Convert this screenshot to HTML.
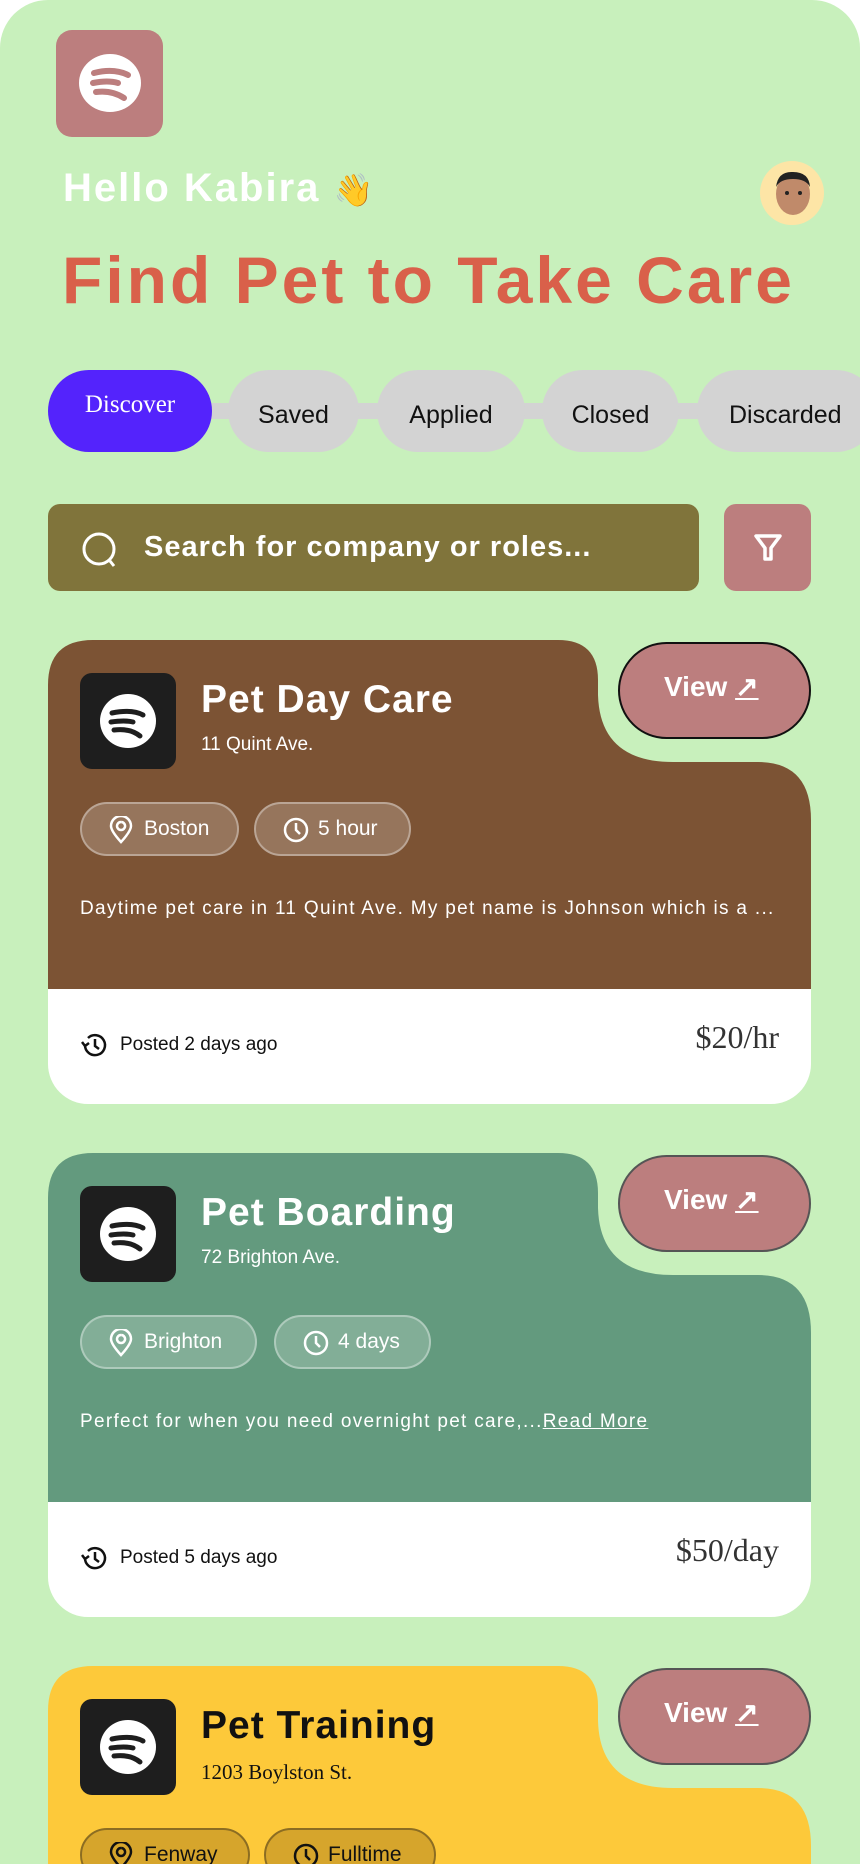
<!DOCTYPE html>
<html><head><meta charset="utf-8"><style>
*{margin:0;padding:0;box-sizing:border-box}
html,body{width:860px;height:1864px;overflow:hidden}
body{background:#fff;font-family:"Liberation Sans",sans-serif}
.page{position:absolute;left:0;top:0;width:860px;height:1864px;background:#c8f0bc;border-radius:48px 48px 0 0;overflow:hidden}
.abs{position:absolute}
.logo{left:56px;top:30px;width:107px;height:107px;background:#bc7e7e;border-radius:16px}
.hello{left:63px;top:166px;font-size:40px;font-weight:bold;color:#fff;letter-spacing:2px}
.avatar{left:760px;top:161px;width:64px;height:64px;border-radius:50%;background:#fde5a6}
.title{left:62px;top:242px;font-size:66px;font-weight:bold;color:#d9604a;white-space:nowrap;letter-spacing:3px}
.bar{left:200px;top:403px;width:660px;height:16px;background:#d3d3d3}
.tab{top:370px;height:82px;border-radius:41px;background:#d3d3d3;font-size:25px;color:#111;display:flex;align-items:center;justify-content:center;padding-top:8px}
.search{left:48px;top:504px;width:651px;height:87px;background:#80743b;border-radius:12px;color:#fff;font-size:29px;font-weight:bold;display:flex;align-items:center;padding-left:96px;letter-spacing:1px}
.filter{left:724px;top:504px;width:87px;height:87px;background:#bc7e7e;border-radius:12px}
.card{left:48px;width:763px}
.card svg.bg{position:absolute;left:0;top:0}
.foot{position:absolute;left:0;top:349px;width:763px;height:115px;background:#fff;border-radius:0 0 40px 40px}
.clogo{position:absolute;left:32px;top:33px;width:96px;height:96px;background:#1e1e1e;border-radius:12px}
.ctitle{position:absolute;left:153px;top:38px;font-size:39px;font-weight:bold;color:#fff;letter-spacing:1px}
.addr{position:absolute;left:153px;top:94px;font-size:19px;color:#fff}
.chip{position:absolute;top:162px;height:54px;border-radius:27px;background:rgba(255,255,255,.2);border:2px solid rgba(255,255,255,.35);color:#fff;font-size:21px;display:flex;align-items:center;padding-left:62px}
.chip svg{position:absolute;left:26px;top:12px}
.desc{position:absolute;left:32px;top:258px;font-size:19px;color:#fff;white-space:nowrap;letter-spacing:1.3px}
.view{position:absolute;left:570px;top:2px;width:193px;height:97px;border-radius:49px;background:#bc7e7e;border:2px solid #111;color:#fff;font-size:28px;font-weight:bold;padding:26px 0 0 44px}
.posted{position:absolute;left:32px;top:45px;font-size:19px;color:#111;padding-left:40px}
.posted svg{position:absolute;left:0;top:-3px}
.price{position:absolute;right:32px;top:30px;font-family:"Liberation Serif",serif;font-size:32px;color:#333}
</style></head><body><div class="page">
<div class="abs logo"><svg width="107" height="107" viewBox="0 0 107 107"><ellipse cx="54" cy="53" rx="31" ry="29" fill="#fff"/><path d="M38 43 Q58 38 72 45 M37 53 Q52 50 62 53 M40 62 Q56 60 68 68" stroke="#bc7e7e" stroke-width="6" fill="none" stroke-linecap="round"/></svg></div>
<div class="abs hello">Hello Kabira <span style="font-size:32px">👋</span></div>
<div class="abs avatar"><svg width="64" height="64" viewBox="0 0 64 64"><ellipse cx="33" cy="33" rx="17" ry="21" fill="#c08a6a"/><path d="M16 26 Q18 10 33 11 Q49 11 50 26 Q46 18 33 18 Q20 18 16 26Z" fill="#222"/><circle cx="27" cy="32" r="2" fill="#222"/><circle cx="40" cy="32" r="2" fill="#222"/></svg></div>
<div class="abs title">Find Pet to Take Care</div>
<div class="abs bar"></div>
<div class="abs tab" style="left:48px;width:164px;background:#5423fc;color:#fff;font-family:'Liberation Serif',serif;font-size:25px;padding-top:0;padding-bottom:12px">Discover</div>
<div class="abs tab" style="left:228px;width:131px">Saved</div>
<div class="abs tab" style="left:377px;width:148px">Applied</div>
<div class="abs tab" style="left:542px;width:137px">Closed</div>
<div class="abs tab" style="left:697px;width:180px;justify-content:flex-start;padding-left:32px">Discarded</div>
<div class="abs search"><svg class="abs" style="left:32px;top:26px" width="40" height="40" viewBox="0 0 40 40"><circle cx="19" cy="19" r="15" stroke="#fff" stroke-width="3" fill="none"/><path d="M30 31 L34 36" stroke="#fff" stroke-width="3"/></svg>Search for company or roles...</div>
<div class="abs filter"><svg class="abs" style="left:28px;top:27px" width="32" height="32" viewBox="0 0 32 32"><path d="M4 5 H28 L19 17 V28 H13 V17 Z" stroke="#fff" stroke-width="3.5" fill="none" stroke-linejoin="round"/></svg></div>

<div class="abs card" style="top:640px;height:464px">
<svg class="bg" width="763" height="349"><path d="M0 45 Q0 0 45 0 H510 Q550 0 550 40 V55 Q552 122 625 122 H710 Q763 122 763 180 V349 H0Z" fill="#7c5334"/></svg>
<div class="clogo"><svg width="96" height="96" viewBox="0 0 96 96"><ellipse cx="48" cy="48" rx="28" ry="27" fill="#fff"/><path d="M32 40 Q52 36 63 42 M31 49 Q45 47 53 49 M34 57 Q50 55 60 63" stroke="#1e1e1e" stroke-width="5" fill="none" stroke-linecap="round"/></svg></div>
<div class="ctitle">Pet Day Care</div><div class="addr">11 Quint Ave.</div>
<div class="chip" style="left:32px;width:159px"><svg width="26" height="28" viewBox="0 0 26 28"><path d="M13 26 Q3 15 3 10 A10 10 0 0 1 23 10 Q23 15 13 26Z M13 6 A4 4 0 1 0 13.1 6" stroke="#fff" stroke-width="2.5" fill="none"/></svg>Boston</div>
<div class="chip" style="left:206px;width:157px"><svg width="28" height="28" viewBox="0 0 28 28"><circle cx="14" cy="14" r="11" stroke="#fff" stroke-width="2.5" fill="none"/><path d="M14 7 V14 L18 18" stroke="#fff" stroke-width="2.5" fill="none"/></svg>5 hour</div>
<div class="desc">Daytime pet care in 11 Quint Ave. My pet name is Johnson which is a ...</div>
<div class="view">View <span style="text-decoration:underline">↗</span></div>
<div class="foot"><div class="posted"><svg width="28" height="28" viewBox="0 0 28 28"><path d="M5 14 A10 10 0 1 0 8 7" stroke="#111" stroke-width="2.5" fill="none"/><path d="M2 11 L5 15 L9 12" stroke="#111" stroke-width="2.5" fill="none"/><path d="M15 8 V15 L19 18" stroke="#111" stroke-width="2.5" fill="none"/></svg>Posted 2 days ago</div><div class="price">$20/hr</div></div>
</div>

<div class="abs card" style="top:1153px;height:464px">
<svg class="bg" width="763" height="349"><path d="M0 45 Q0 0 45 0 H510 Q550 0 550 40 V55 Q552 122 625 122 H710 Q763 122 763 180 V349 H0Z" fill="#639a7e"/></svg>
<div class="clogo"><svg width="96" height="96" viewBox="0 0 96 96"><ellipse cx="48" cy="48" rx="28" ry="27" fill="#fff"/><path d="M32 40 Q52 36 63 42 M31 49 Q45 47 53 49 M34 57 Q50 55 60 63" stroke="#1e1e1e" stroke-width="5" fill="none" stroke-linecap="round"/></svg></div>
<div class="ctitle">Pet Boarding</div><div class="addr">72 Brighton Ave.</div>
<div class="chip" style="left:32px;width:177px"><svg width="26" height="28" viewBox="0 0 26 28"><path d="M13 26 Q3 15 3 10 A10 10 0 0 1 23 10 Q23 15 13 26Z M13 6 A4 4 0 1 0 13.1 6" stroke="#fff" stroke-width="2.5" fill="none"/></svg>Brighton</div>
<div class="chip" style="left:226px;width:157px"><svg width="28" height="28" viewBox="0 0 28 28"><circle cx="14" cy="14" r="11" stroke="#fff" stroke-width="2.5" fill="none"/><path d="M14 7 V14 L18 18" stroke="#fff" stroke-width="2.5" fill="none"/></svg>4 days</div>
<div class="desc">Perfect for when you need overnight pet care,...<u>Read More</u></div>
<div class="view" style="border-color:#555">View <span style="text-decoration:underline">↗</span></div>
<div class="foot"><div class="posted"><svg width="28" height="28" viewBox="0 0 28 28"><path d="M5 14 A10 10 0 1 0 8 7" stroke="#111" stroke-width="2.5" fill="none"/><path d="M2 11 L5 15 L9 12" stroke="#111" stroke-width="2.5" fill="none"/><path d="M15 8 V15 L19 18" stroke="#111" stroke-width="2.5" fill="none"/></svg>Posted 5 days ago</div><div class="price">$50/day</div></div>
</div>

<div class="abs card" style="top:1666px;height:198px;overflow:hidden">
<svg class="bg" width="763" height="349"><path d="M0 45 Q0 0 45 0 H510 Q550 0 550 40 V55 Q552 122 625 122 H710 Q763 122 763 180 V349 H0Z" fill="#fdc93a"/></svg>
<div class="clogo"><svg width="96" height="96" viewBox="0 0 96 96"><ellipse cx="48" cy="48" rx="28" ry="27" fill="#fff"/><path d="M32 40 Q52 36 63 42 M31 49 Q45 47 53 49 M34 57 Q50 55 60 63" stroke="#1e1e1e" stroke-width="5" fill="none" stroke-linecap="round"/></svg></div>
<div class="ctitle" style="color:#111">Pet Training</div><div class="addr" style="color:#111;font-family:'Liberation Serif',serif;font-size:21px">1203 Boylston St.</div>
<div class="chip" style="left:32px;width:170px;background:#d6a52c;border-color:#8c6d22;color:#111"><svg width="26" height="28" viewBox="0 0 26 28"><path d="M13 26 Q3 15 3 10 A10 10 0 0 1 23 10 Q23 15 13 26Z M13 6 A4 4 0 1 0 13.1 6" stroke="#111" stroke-width="2.5" fill="none"/></svg>Fenway</div>
<div class="chip" style="left:216px;width:172px;background:#d6a52c;border-color:#8c6d22;color:#111"><svg width="28" height="28" viewBox="0 0 28 28"><circle cx="14" cy="14" r="11" stroke="#111" stroke-width="2.5" fill="none"/><path d="M14 7 V14 L18 18" stroke="#111" stroke-width="2.5" fill="none"/></svg>Fulltime</div>
<div class="view" style="border-color:#555">View <span style="text-decoration:underline">↗</span></div>
</div>
</div></body></html>
